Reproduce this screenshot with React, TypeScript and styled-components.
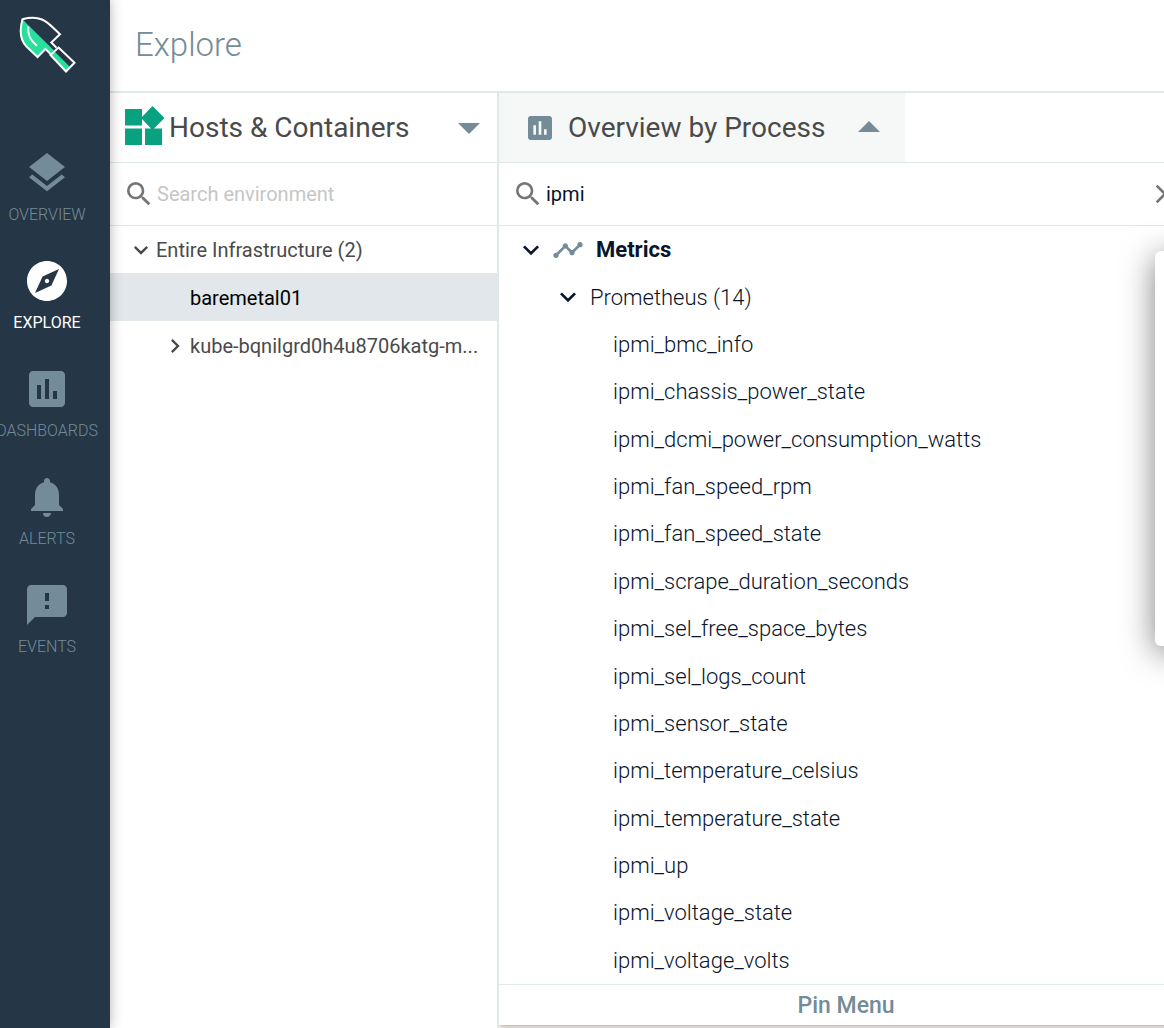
import React, { useState } from "react";
import styled, { createGlobalStyle, css } from "styled-components";
import {
  MdAssessment,
  MdChevronRight,
  MdClose,
  MdExpandMore,
  MdExplore,
  MdFeedback,
  MdLayers,
  MdNotifications,
  MdSearch,
  MdTimeline,
} from "react-icons/md";

const color = {
  navy: "#253646",
  slate: "#738c98",
  line: "#dfe9e8",
  ink: "#08152b",
  text: "#4a4a4a",
  green: "#08a280",
  mint: "#27e09c",
};

const GlobalStyle = createGlobalStyle`
  *, *::before, *::after { box-sizing: border-box; }
  body {
    margin: 0;
    background: #fff;
    font-family: Roboto, "Liberation Sans", sans-serif;
    font-weight: 300;
    color: ${color.text};
    overflow: hidden;
  }
  button, input { font: inherit; color: inherit; }
  button { border: 0; padding: 0; background: none; cursor: pointer; }
  svg { display: block; flex: none; }
`;

const Page = styled.div`
  display: flex;
  min-height: 100vh;
  overflow: hidden;
  position: relative;
`;

const Sidebar = styled.nav`
  width: 110px;
  flex: none;
  padding: 15px 16px 0 0;
  background: ${color.navy};
  box-shadow: 0 0 12px rgba(0, 0, 0, 0.3);
  z-index: 2;
  display: flex;
  flex-direction: column;
  align-items: center;
  gap: 76px;
`;

const Logo = styled.a`
  display: block;
`;

const NavList = styled.ul`
  list-style: none;
  margin: 0;
  padding: 0;
  display: flex;
  flex-direction: column;
  align-items: center;
  gap: 32px;
`;

const NavLink = styled.a<{ $active?: boolean }>`
  display: flex;
  flex-direction: column;
  align-items: center;
  gap: 8px;
  font-size: 16px;
  line-height: 20px;
  text-decoration: none;
  color: ${(p) => (p.$active ? "#fff" : color.slate)};
  font-weight: ${(p) => (p.$active ? 400 : 300)};
`;

const Main = styled.main`
  flex: 1;
  min-width: 0;
  display: flex;
  flex-direction: column;
`;

const Header = styled.header`
  height: 93px;
  padding: 0 25px 2px;
  display: flex;
  align-items: center;
  border-bottom: 2px solid ${color.line};
`;

const Title = styled.h1`
  margin: 0;
  font-size: 33px;
  line-height: 40px;
  font-weight: 300;
  color: ${color.slate};
`;

const Columns = styled.div`
  flex: 1;
  display: flex;
`;

const Environment = styled.section`
  width: 389px;
  flex: none;
  border-right: 2px solid ${color.line};
`;

const bar = css`
  display: flex;
  align-items: center;
  border-bottom: 1px solid ${color.line};
`;

const Scope = styled.button`
  ${bar}
  width: 100%;
  height: 70px;
  padding: 0 17px 0 15px;
  gap: 4px;
`;

const Heading = styled.span`
  font-size: 28px;
  line-height: 32px;
  font-weight: 400;
  white-space: nowrap;
  text-align: left;
`;

const ScopeHeading = styled(Heading)`
  flex: 1;
`;

const SearchRow = styled.label`
  ${bar}
  height: 63px;
  padding: 0 12px 0 13px;
  gap: 2px;
  color: #757575;
`;

const SearchInput = styled.input`
  flex: 1;
  min-width: 0;
  border: 0;
  outline: 0;
  padding: 0;
  background: none;
  font-size: 20px;
  line-height: 24px;
  font-weight: 400;
  color: ${color.ink};
  &::placeholder { color: #c6c6c6; opacity: 1; }
`;

const Tree = styled.ul`
  list-style: none;
  margin: -1px 0 0;
  padding: 0;
`;

const TreeRow = styled.button<{ $level: number; $selected?: boolean }>`
  display: flex;
  align-items: center;
  width: 100%;
  height: 48px;
  padding: 2px 0 0 ${(p) => 17 + p.$level * 34}px;
  font-size: 20px;
  line-height: 24px;
  font-weight: 400;
  gap: 1px;
  text-align: left;
  color: ${(p) => (p.$selected ? "#000" : color.text)};
  background: ${(p) => (p.$selected ? "#e1e7ea" : "transparent")};
`;

const Toggle = styled.span`
  flex: none;
  width: 28px;
  height: 28px;
`;

const Label = styled.span`
  white-space: nowrap;
`;

const MenuColumn = styled.section`
  flex: 1;
  min-width: 0;
  display: flex;
  flex-direction: column;
  margin-right: -29px;
  padding-bottom: 3px;
  overflow: hidden;
`;

const Menu = styled.div`
  flex: 1;
  display: flex;
  flex-direction: column;
  background: #fff;
  box-shadow: 0 2px 6px rgba(60, 40, 20, 0.4);
`;

const TabBar = styled.div`
  ${bar}
  height: 70px;
  align-items: stretch;
`;

const Tab = styled.button`
  display: flex;
  align-items: center;
  padding: 0 25px;
  gap: 12px;
  background: #f5f8f7;
`;

const TabHeading = styled(Heading)`
  margin-right: 21px;
`;

const MetricList = styled.ul`
  list-style: none;
  margin: 0;
  padding: 0;
  flex: 1;
  display: flex;
  flex-direction: column;
`;

const MetricItem = styled.li`
  flex: 1 0 47px;
  display: flex;
`;

const MetricRow = styled.button<{ $indent: number; $bold?: boolean }>`
  flex: 1;
  display: flex;
  align-items: center;
  gap: 5px;
  padding-left: ${(p) => p.$indent}px;
  font-size: 22px;
  line-height: 26px;
  font-weight: ${(p) => (p.$bold ? 700 : 300)};
  color: ${color.ink};
  text-align: left;
`;

const MetricLabel = styled.span`
  padding: 1px 0 0 1px;
`;

const MetricsIcon = styled(MdTimeline)`
  margin-right: 6px;
  color: ${color.slate};
`;

const PinButton = styled.button`
  height: 41px;
  padding-top: 2px;
  border-top: 1px solid ${color.line};
  font-size: 23px;
  line-height: 28px;
  font-weight: 500;
  color: ${color.slate};
`;

const Popover = styled.aside`
  position: absolute;
  top: 251px;
  right: -31px;
  width: 40px;
  height: 395px;
  border-radius: 6px;
  background: #fff;
  box-shadow: 0 6px 32px rgba(0, 0, 0, 0.5);
`;

const Caret = ({ up = false }: { up?: boolean }) => (
  <svg width="22" height="14" viewBox="0 0 22 14" fill={color.slate} aria-hidden="true">
    <path d={up ? "M0 11h22L11 0z" : "M0 2h22L11 13z"} />
  </svg>
);

const HostsIcon = () => (
  <svg width="40" height="44" viewBox="0 0 40 44" fill={color.green} aria-hidden="true">
    <path d="M0 3h17v16.500H0zM0 22.500h17v16.500H0zM20 22.500h17v16.500H20zM27.500 0L39.500 12L27.500 24L16 12z" />
  </svg>
);

const TrowelLogo = () => (
  <svg width="58" height="58" viewBox="18 15 58 58" fill="none" aria-hidden="true">
    <path d="M22 19C19 33 21 42 26 46L37.500 57L45.500 49L50.500 54L54 50.500z" fill={color.mint} />
    <path d="M54 51L70 67L66 71.500L50.500 55z" fill={color.mint} />
    <path
      d="M50.500 54L45.500 49L37.500 57L26.500 46.500C20 40 19.500 30 22.500 19.200C31 17 37 17.500 42 19.500C49 22.500 53 28 60 34.200L51.300 42.500L56.500 47.700"
      stroke="#fff"
      strokeWidth="2"
    />
    <path d="M58.500 47.500L74.500 62.700L66 71.500L50.500 55z" stroke="#fff" strokeWidth="2" />
    <path d="M28.300 26.500C27.500 36 31 41 37 45.700" stroke="#fff" strokeWidth="2" />
  </svg>
);

const sections = [
  { label: "OVERVIEW", Icon: MdLayers },
  { label: "EXPLORE", Icon: MdExplore },
  { label: "DASHBOARDS", Icon: MdAssessment },
  { label: "ALERTS", Icon: MdNotifications },
  { label: "EVENTS", Icon: MdFeedback },
];

const metrics = [
  "ipmi_bmc_info",
  "ipmi_chassis_power_state",
  "ipmi_dcmi_power_consumption_watts",
  "ipmi_fan_speed_rpm",
  "ipmi_fan_speed_state",
  "ipmi_scrape_duration_seconds",
  "ipmi_sel_free_space_bytes",
  "ipmi_sel_logs_count",
  "ipmi_sensor_state",
  "ipmi_temperature_celsius",
  "ipmi_temperature_state",
  "ipmi_up",
  "ipmi_voltage_state",
  "ipmi_voltage_volts",
];

export default function App() {
  const [query, setQuery] = useState("ipmi");
  return (
    <Page>
      <GlobalStyle />
      <Sidebar aria-label="Main">
        <Logo href="#home" aria-label="Home">
          <TrowelLogo />
        </Logo>
        <NavList>
          {sections.map(({ label, Icon }) => (
            <li key={label}>
              <NavLink href={`#${label.toLowerCase()}`} $active={label === "EXPLORE"}>
                <Icon size={48} />
                {label}
              </NavLink>
            </li>
          ))}
        </NavList>
      </Sidebar>
      <Main>
        <Header>
          <Title>Explore</Title>
        </Header>
        <Columns>
          <Environment>
            <Scope>
              <HostsIcon />
              <ScopeHeading>Hosts &amp; Containers</ScopeHeading>
              <Caret />
            </Scope>
            <SearchRow>
              <MdSearch size={32} />
              <SearchInput placeholder="Search environment" aria-label="Search environment" />
            </SearchRow>
            <Tree>
              <li>
                <TreeRow $level={0}>
                  <Toggle><MdExpandMore size={28} /></Toggle>
                  <Label>Entire Infrastructure (2)</Label>
                </TreeRow>
              </li>
              <li>
                <TreeRow $level={1} $selected>
                  <Toggle />
                  <Label>baremetal01</Label>
                </TreeRow>
              </li>
              <li>
                <TreeRow $level={1}>
                  <Toggle><MdChevronRight size={28} /></Toggle>
                  <Label>kube-bqnilgrd0h4u8706katg-m...</Label>
                </TreeRow>
              </li>
            </Tree>
          </Environment>
          <MenuColumn>
            <Menu>
              <TabBar>
                <Tab aria-expanded="true">
                  <MdAssessment size={32} color={color.slate} />
                  <TabHeading>Overview by Process</TabHeading>
                  <Caret up />
                </Tab>
              </TabBar>
              <SearchRow>
                <MdSearch size={32} />
                <SearchInput
                  aria-label="Search metrics"
                  value={query}
                  onChange={(e) => setQuery(e.target.value)}
                />
                <button aria-label="Clear search" onClick={() => setQuery("")}>
                  <MdClose size={32} />
                </button>
              </SearchRow>
              <MetricList>
                <MetricItem>
                  <MetricRow $indent={16} $bold>
                    <MdExpandMore size={32} />
                    <MetricsIcon size={32} />
                    <MetricLabel>Metrics</MetricLabel>
                  </MetricRow>
                </MetricItem>
                <MetricItem>
                  <MetricRow $indent={53}>
                    <MdExpandMore size={32} />
                    <MetricLabel>Prometheus (14)</MetricLabel>
                  </MetricRow>
                </MetricItem>
                {metrics.map((name) => (
                  <MetricItem key={name}>
                    <MetricRow $indent={113}>
                      <MetricLabel>{name}</MetricLabel>
                    </MetricRow>
                  </MetricItem>
                ))}
              </MetricList>
              <PinButton>Pin Menu</PinButton>
            </Menu>
          </MenuColumn>
        </Columns>
      </Main>
      <Popover aria-label="Details" />
    </Page>
  );
}
